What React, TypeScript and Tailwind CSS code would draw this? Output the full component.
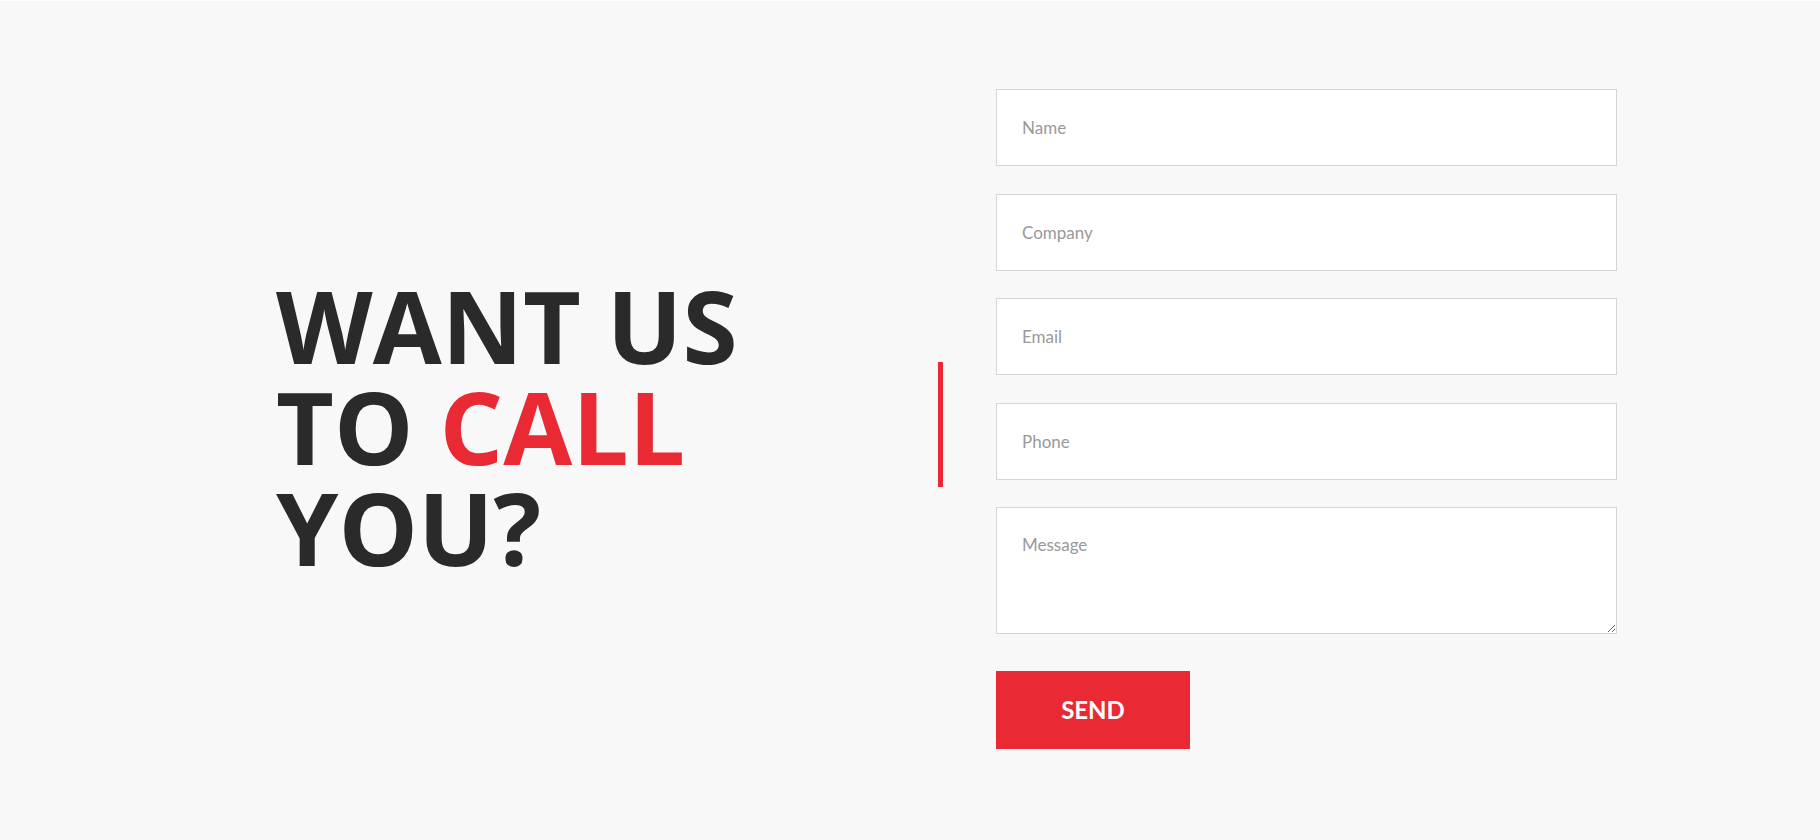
import { useState } from "react";

const fields = ["Name", "Company", "Email", "Phone"];

function ContactForm() {
  const [values, setValues] = useState<Record<string, string>>({});

  const handleChange = (key: string, value: string) => {
    setValues((prev) => ({ ...prev, [key]: value }));
  };

  return (
    <form
      className="flex w-[621px] flex-col gap-[27.5px]"
      onSubmit={(e) => e.preventDefault()}
    >
      {fields.map((field) => (
        <input
          key={field}
          type="text"
          placeholder={field}
          value={values[field] || ""}
          onChange={(e) => handleChange(field, e.target.value)}
          className="h-[77px] w-full border border-[#d5d5d5] bg-white pl-[25px] text-[17px] text-[#333] outline-none placeholder:text-[#999]"
        />
      ))}
      <textarea
        placeholder="Message"
        value={values.message || ""}
        onChange={(e) => handleChange("message", e.target.value)}
        className="h-[127px] w-full border border-[#d5d5d5] bg-white pl-[25px] pt-[24px] text-[17px] leading-[1.5] text-[#333] outline-none placeholder:text-[#999]"
      />
      <button
        type="submit"
        className="mt-[9px] h-[78px] w-[194px] cursor-pointer bg-[#e92a35] text-[24px] font-bold uppercase text-white"
      >
        Send
      </button>
    </form>
  );
}

export default function App() {
  return (
    <div
      className="min-h-[840px] border-t border-white bg-[#f8f8f8]"
      style={{ fontFamily: "Lato, 'Open Sans', sans-serif" }}
    >
      <section className="flex items-center pb-[91px] pl-[276px] pt-[88px]">
        <div className="mt-[15px] w-[662px]">
          <h2 className="font-['Open_Sans',sans-serif] text-[100px] font-bold uppercase leading-[101px] text-[#2a2a2a]">
            Want us
            <br />
            to <span className="text-[#e92a35]">call</span>
            <br />
            you?
          </h2>
        </div>
        <div className="mt-[12px] h-[125px] w-[5px] bg-[#e92a35]" />
        <div className="ml-[53px]">
          <ContactForm />
        </div>
      </section>
    </div>
  );
}
